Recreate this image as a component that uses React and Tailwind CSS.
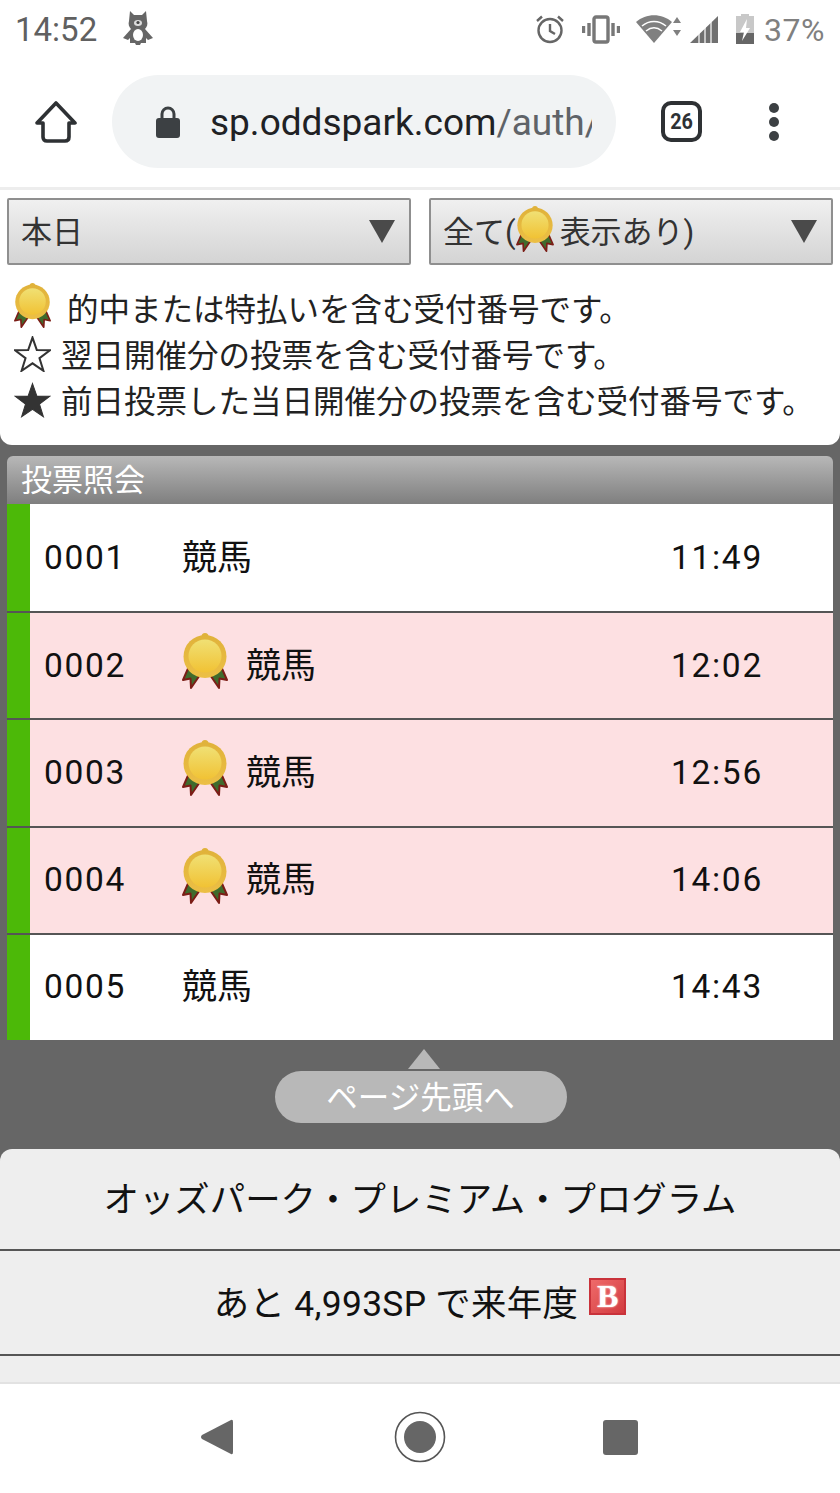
import React from 'react';

const JP = { fontFamily: '"Roboto", "Noto Sans CJK JP", sans-serif' };

// メダルのアイコン
const Medal = ({ className }) => (
  <svg viewBox="0 0 46 56" className={className}>
    <defs>
      <linearGradient id="medalRim" x1="0" y1="0" x2="0" y2="1">
        <stop offset="0" stopColor="#e0b23a" />
        <stop offset="1" stopColor="#ecbf45" />
      </linearGradient>
      <linearGradient id="medalFace" x1="0" y1="0" x2="0" y2="1">
        <stop offset="0" stopColor="#f0e074" />
        <stop offset="1" stopColor="#f1c234" />
      </linearGradient>
    </defs>
    <path d="M8 31 L1 47 L8.5 45.5 L9 55 L20 39Z" fill="#3f6b2d" stroke="#7b1d16" strokeWidth="2" strokeLinejoin="round" />
    <path d="M38 31 L45 47 L37.5 45.5 L37 55 L26 39Z" fill="#3f6b2d" stroke="#7b1d16" strokeWidth="2" strokeLinejoin="round" />
    <circle cx="23" cy="3.5" r="3.5" fill="#e0b23a" />
    <circle cx="23" cy="23.5" r="21.5" fill="url(#medalRim)" />
    <circle cx="23" cy="23" r="16.5" fill="url(#medalFace)" />
  </svg>
);

const Arrow = () => (
  <svg viewBox="0 0 26 23" className="w-[26px] h-[23px] shrink-0">
    <path d="M0 0H26L13 23Z" fill="#4a4a4a" />
  </svg>
);

const Bear = () => (
  <svg viewBox="0 0 30 36" className="w-[30px] h-[36px] ml-[26px] mt-[-3px]" fill="#666">
    <path d="M7 1 L11 5 H19 L23 1 L24 11 C25 14 24 17 22 19 L30 28 L25 30 L23 28 V33 H18 L17 35 H13 L12 33 H7 V28 L5 30 L0 28 L8 19 C6 17 5 14 6 11Z" />
    <ellipse cx="15" cy="25" rx="5" ry="6" fill="#fff" />
    <ellipse cx="15" cy="13" rx="4" ry="3" fill="#ddd" />
    <circle cx="15" cy="12.5" r="1.6" fill="#444" />
  </svg>
);

const StatusIcons = () => (
  <div className="flex items-center text-[#808080]">
    <div className="flex items-center mb-[2px]">
      {/* アラーム */}
      <svg viewBox="0 0 30 30" className="w-[30px] h-[30px]" fill="none" stroke="#666" strokeWidth="2.4">
        <circle cx="15" cy="16.5" r="11.5" />
        <path d="M15 10v7l5 3M2 7l5-4.5M28 7l-5-4.5" />
      </svg>
      {/* バイブ */}
      <svg viewBox="0 0 38 30" className="w-[38px] h-[30px] ml-[17px]" fill="none" stroke="#777" strokeWidth="3.4">
        <rect x="12" y="3" width="14" height="25" rx="2" />
        <path d="M7 9v13M1.5 12v7M31 9v13M36.5 12v7" />
      </svg>
      {/* Wi-Fi */}
      <svg viewBox="0 0 46 30" className="w-[46px] h-[30px] ml-[16px]">
        <path d="M0 8 C10 -1 26 -1 36 8 L18 29Z" fill="#808080" />
        <path d="M6 12 C13 6 23 6 30 12 M10 17 C15 13 21 13 26 17" stroke="#fff" strokeWidth="1.6" fill="none" />
        <path d="M41 3l4 6h-8zM41 22l-4-6h8z" fill="#808080" />
      </svg>
      {/* 電波 */}
      <svg viewBox="0 0 28 28" className="w-[28px] h-[28px] ml-[8px]">
        <path d="M0 28 L28 1 V28Z" fill="#707070" />
        <path d="M9 28V17M15 28V12M21 28V7" stroke="#fff" strokeWidth="1.2" />
      </svg>
      {/* バッテリー */}
      <svg viewBox="0 0 18 30" className="w-[18px] h-[30px] ml-[18px]">
        <path d="M5 0h8v2h5v28H0V2h5z" fill="#c8c8c8" />
        <path d="M0 19h18v11H0z" fill="#666" />
        <path d="M11 5l-7 13h4l-2 9 8-13h-4z" fill="#fff" />
      </svg>
    </div>
    <span className="ml-[10px] text-[32px] leading-none tracking-[0.5px]">37%</span>
  </div>
);

const Toolbar = () => (
  <div className="h-[131px] flex items-center pb-[3px] border-b-[3px] border-[#ededed]">
    <svg viewBox="0 0 42 42" className="w-[42px] h-[42px] ml-[35px] shrink-0" fill="none" stroke="#2e3134" strokeWidth="3.6" strokeLinejoin="round" strokeLinecap="round">
      <path d="M2 22 L21 2 L40 22 H34 V36 Q34 40 30 40 H12 Q8 40 8 36 V22Z" />
    </svg>
    <div className="ml-[35px] w-[504px] h-[93px] rounded-full bg-[#f1f3f4] flex items-center pl-[44px] shrink-0">
      <svg viewBox="0 0 24 32" className="w-[24px] h-[32px] shrink-0">
        <path d="M6 13V8a6 6 0 0 1 12 0v5" fill="none" stroke="#3c4043" strokeWidth="3" />
        <rect x="0" y="12" width="24" height="20" rx="3" fill="#3c4043" />
      </svg>
      <div className="ml-[30px] w-[382px] overflow-hidden whitespace-nowrap text-[37px] leading-none text-[#202124] mt-[2px]" style={JP}>
        sp.oddspark.com<span className="text-[#5f6368]">/auth/</span>
      </div>
    </div>
    <div className="ml-[45px] w-[41px] h-[41px] rounded-[10px] border-[4px] border-[#2e3134] flex items-center justify-center text-[22px] font-bold text-[#2e3134] shrink-0">
      <span className="scale-x-90" style={JP}>26</span>
    </div>
    <div className="ml-[67px] flex flex-col gap-[4px] shrink-0">
      <span className="w-[10px] h-[10px] rounded-full bg-[#3c4043]" />
      <span className="w-[10px] h-[10px] rounded-full bg-[#3c4043]" />
      <span className="w-[10px] h-[10px] rounded-full bg-[#3c4043]" />
    </div>
  </div>
);

const SelectBox = ({ children }) => (
  <div className="flex-1 h-[67px] flex items-center justify-between pl-[12px] pr-[14px] border-[2px] border-[#8f8f8f] rounded-[2px] bg-gradient-to-b from-[#f0f0f0] to-[#d4d4d4] text-[31px] text-[#333]">
    <div className="flex items-center whitespace-nowrap pt-[4px]">{children}</div>
    <Arrow />
  </div>
);

const rows = [
  { no: '0001', time: '11:49', hit: false },
  { no: '0002', time: '12:02', hit: true },
  { no: '0003', time: '12:56', hit: true },
  { no: '0004', time: '14:06', hit: true },
  { no: '0005', time: '14:43', hit: false },
];

const Star = ({ filled }) => (
  <svg viewBox="0 0 36 35" className="w-[37px] h-[36px] shrink-0 mt-[-7px]">
    <path
      d="M18 1.5 L22.2 13.6 L35 13.8 L24.8 21.6 L28.6 33.8 L18 26.6 L7.4 33.8 L11.2 21.6 L1 13.8 L13.8 13.6Z"
      fill={filled ? '#333' : 'none'}
      stroke="#333"
      strokeWidth={filled ? 1 : 2}
    />
  </svg>
);

export default function App() {
  return (
    <div className="w-[840px] h-[1493px] overflow-hidden flex flex-col bg-[#666]" style={JP}>
      {/* ステータスバー + アドレスバー */}
      <div className="bg-white h-[190px] shrink-0 flex flex-col">
        <div className="h-[59px] shrink-0 flex items-center justify-between pl-[15px] pr-[15px]">
          <div className="flex items-center">
            <span className="text-[33px] leading-none text-[#606060]">14:52</span>
            <Bear />
          </div>
          <StatusIcons />
        </div>
        <Toolbar />
      </div>

      {/* セレクト + 凡例 */}
      <div className="bg-white h-[255px] shrink-0 rounded-b-[12px] pt-[8px]">
        <div className="flex gap-[18px] px-[7px]">
          <SelectBox>本日</SelectBox>
          <SelectBox>
            全て(
            <Medal className="w-[38px] h-[46px] mt-[-10px]" />
            <span className="ml-[6px]">表示あり)</span>
          </SelectBox>
        </div>
        <div className="pl-[14px] pt-[23px] text-[#222] text-[31.5px] leading-[46px] whitespace-nowrap">
          <div className="flex items-center h-[46px]">
            <Medal className="w-[37px] h-[45px] mt-[-11px]" />
            <span className="ml-[16px]">的中または特払いを含む受付番号です。</span>
          </div>
          <div className="flex items-center h-[46px]">
            <Star />
            <span className="ml-[10px]">翌日開催分の投票を含む受付番号です。</span>
          </div>
          <div className="flex items-center h-[46px]">
            <Star filled />
            <span className="ml-[10px]">前日投票した当日開催分の投票を含む受付番号です。</span>
          </div>
        </div>
      </div>

      {/* 投票照会 */}
      <div className="px-[7px] pt-[11px] shrink-0">
        <div className="h-[48px] rounded-t-[6px] bg-gradient-to-b from-[#b8b8b8] to-[#7f7f7f] flex items-center pl-[14px] pt-[2px] text-[31px] text-white">
          投票照会
        </div>
        <div>
          {rows.map((r, i) => (
            <div
              key={r.no}
              className={`h-[107.2px] flex border-t-2 first:border-t-0 border-[#555] ${r.hit ? 'bg-[#fde0e2]' : 'bg-white'}`}
            >
              <div className="w-[23px] bg-[#4cb908] shrink-0" />
              <div className={`flex-1 flex items-center pl-[14px] text-[33.5px] text-[#111] tracking-[1.7px] ${i === 0 ? 'pt-[2px]' : ''}`}>
                <span className="w-[138px] shrink-0">{r.no}</span>
                <div className="flex-1 flex items-center">
                  {r.hit && <Medal className="w-[46px] h-[56px] mr-[18px] mt-[-9px]" />}
                  <span className="text-[35px] tracking-normal mt-[2px]">競馬</span>
                </div>
                <span className="w-[162px] shrink-0">{r.time}</span>
              </div>
            </div>
          ))}
        </div>
      </div>

      {/* ページ先頭へ */}
      <div className="h-[109px] shrink-0 flex flex-col items-center pt-[9px]">
        <div className="w-[32px] h-[20px] bg-[#b8b8b8] [clip-path:polygon(50%_0,100%_100%,0_100%)] ml-[8px]" />
        <div className="mt-[2px] w-[292px] h-[52px] rounded-full bg-[#b8b8b8] flex items-center justify-center pt-[4px] text-[31.5px] text-white ml-[1px]">
          ページ先頭へ
        </div>
      </div>

      {/* プログラム */}
      <div className="flex-1 bg-[#eeeeee] rounded-t-[12px] text-[#111] text-[35.4px] flex flex-col">
        <div className="h-[102px] shrink-0 flex items-center justify-center pt-[4px] border-b-2 border-[#555]">
          オッズパーク・プレミアム・プログラム
        </div>
        <div className="h-[105px] shrink-0 flex items-center justify-center border-b-2 border-[#555]">
          <span className="tracking-[0.3px] mt-[5px]">あと 4,993SP で来年度</span>
          <span className="ml-[11px] mt-[-12px] w-[37px] h-[37px] border-2 border-[#c9323a] bg-gradient-to-br from-[#ef6a6a] to-[#d23a3f] flex items-center justify-center text-white text-[32px] font-bold leading-none [text-shadow:0_0_2px_#fff]" style={{ fontFamily: '"Liberation Serif", serif' }}>B</span>
        </div>
        <div className="h-[26px] shrink-0" />
        {/* ナビゲーションバー */}
        <div className="flex-1 bg-white border-t-2 border-[#e2e2e2] flex items-center pb-[2px]">
          <svg viewBox="0 0 34 38" className="w-[34px] h-[38px] ml-[200px] shrink-0">
            <path d="M31 2 Q33 1 33 4 V34 Q33 37 31 36 L2 21 Q0 19 2 17Z" fill="#666" />
          </svg>
          <svg viewBox="0 0 52 52" className="w-[52px] h-[52px] ml-[160px] shrink-0">
            <circle cx="26" cy="26" r="24.5" fill="none" stroke="#555" strokeWidth="1.6" />
            <circle cx="26" cy="26" r="16" fill="#666" />
          </svg>
          <div className="w-[35px] h-[35px] rounded-[3px] bg-[#666] ml-[157px] shrink-0" />
        </div>
      </div>
    </div>
  );
}
